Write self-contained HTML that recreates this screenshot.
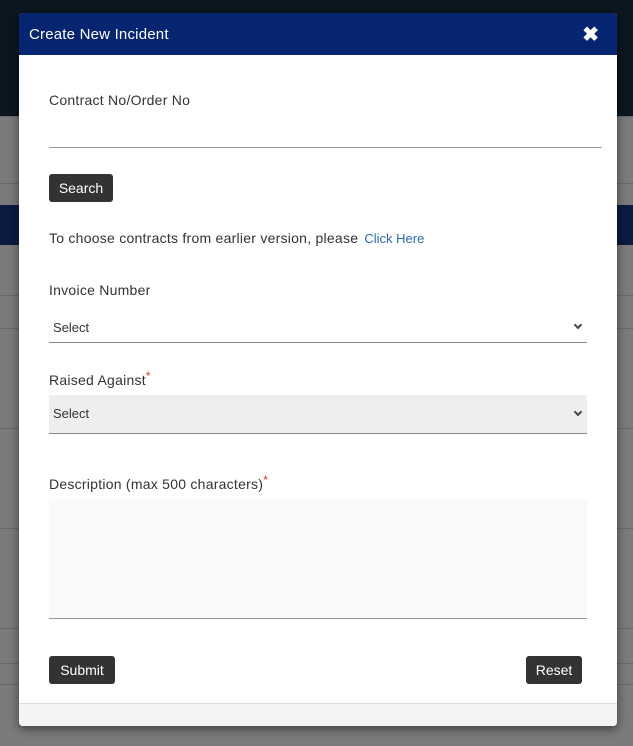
<!DOCTYPE html>
<html><head><style>
*{box-sizing:border-box;margin:0;padding:0}
body{width:633px;height:746px;position:relative;overflow:hidden;background:#7b7b7b;font-family:"Liberation Sans",sans-serif;color:#333}
.bg{position:absolute;left:0;width:633px}
.ln{position:absolute;left:0;width:633px;height:1px;background:#6a6a6a}
.modal{position:absolute;left:19px;top:13px;width:598px;height:713px;background:#fff;border-radius:4px;overflow:hidden;box-shadow:0 3px 10px rgba(0,0,0,.5)}
.hdr{height:42px;background:#052570;color:#fff;font-size:15px;padding:13px 0 0 10px;letter-spacing:.2px}
.x{position:absolute;right:18px;top:9px;color:#fff;font-size:20px;font-weight:bold}
.abs{position:absolute}
.lbl{font-size:14px;color:#333;letter-spacing:.25px}
.btn{position:absolute;background:#333;color:#fff;font-size:14px;border-radius:3px;text-align:center;line-height:28px;height:28px}
.sel{position:absolute;left:30px;width:538px;height:32px;border-bottom:1px solid #888;font-size:13px;padding:9px 0 0 4px;color:#333}
.chev{position:absolute;right:6px;top:11px;width:6px;height:6px;border-right:2px solid #444;border-bottom:2px solid #444;transform:rotate(45deg)}
.req{color:#d33;font-size:12px;vertical-align:top;position:relative;top:-3px}
</style></head><body>
<div class="bg" style="top:0;height:116px;background:#0b1620"></div>
<div class="ln" style="top:116px"></div>
<div class="ln" style="top:183px"></div>
<div class="bg" style="top:205px;height:40px;background:#0b1a40"></div>
<div class="ln" style="top:295px"></div>
<div class="ln" style="top:328px"></div>
<div class="ln" style="top:428px"></div>
<div class="ln" style="top:528px"></div>
<div class="ln" style="top:628px"></div>
<div class="ln" style="top:663px"></div>
<div class="ln" style="top:684px"></div>
<div class="modal">
 <div class="hdr">Create New Incident</div>
 <div class="x">✖</div>
 <div class="abs lbl" style="left:30px;top:79px">Contract No/Order No</div>
 <div class="abs" style="left:30px;top:134px;width:553px;height:1px;background:#999"></div>
 <div class="btn" style="left:30px;top:161px;width:64px">Search</div>
 <div class="abs lbl" style="left:30px;top:217px">To choose contracts from earlier version, please <span style="color:#2b6cb0;font-size:13px;margin-left:2px;letter-spacing:0">Click Here</span></div>
 <div class="abs lbl" style="left:30px;top:269px">Invoice Number</div>
 <div class="sel" style="top:298px">Select<div class="chev"></div></div>
 <div class="abs lbl" style="left:30px;top:359px">Raised Against<span class="req">*</span></div>
 <div class="sel" style="top:382px;height:39px;background:#eee;padding-top:11px">Select<div class="chev" style="top:14px"></div></div>
 <div class="abs lbl" style="left:30px;top:463px">Description (max 500 characters)<span class="req">*</span></div>
 <div class="abs" style="left:30px;top:486px;width:538px;height:120px;background:#f9f9f9;border-bottom:1px solid #999"></div>
 <div class="btn" style="left:30px;top:643px;width:66px">Submit</div>
 <div class="btn" style="left:507px;top:643px;width:56px">Reset</div>
 <div class="abs" style="left:0;top:690px;width:598px;height:23px;background:#f4f4f4;border-top:1px solid #ddd"></div>
</div>
</body></html>
